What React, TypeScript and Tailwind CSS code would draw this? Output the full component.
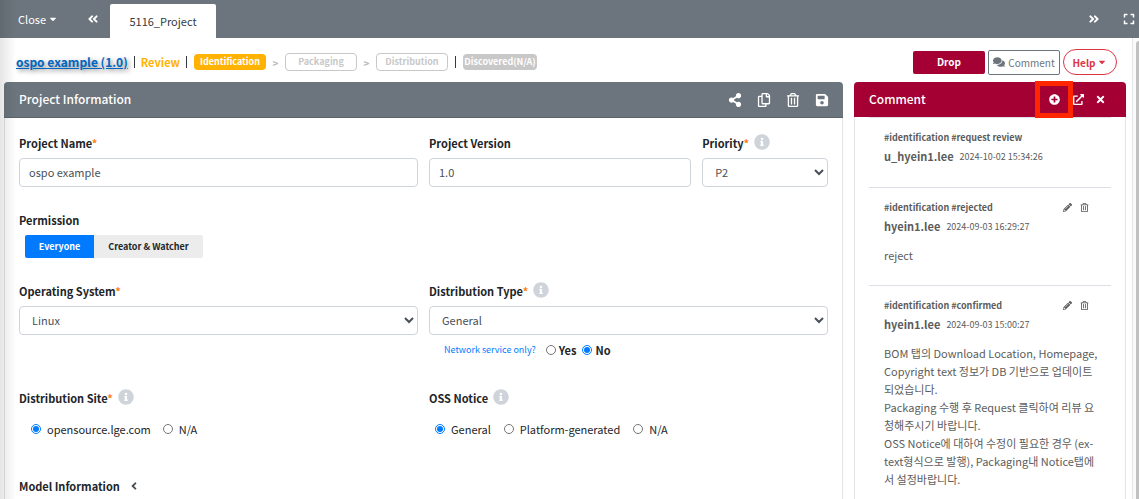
import React, { useState } from "react";
import {
  FaAngleDoubleLeft,
  FaAngleDoubleRight,
  FaAngleLeft,
  FaCaretDown,
  FaComments,
  FaExpand,
  FaExternalLinkAlt,
  FaInfoCircle,
  FaPencilAlt,
  FaPlusCircle,
  FaRegCopy,
  FaRegTrashAlt,
  FaSave,
  FaShareAlt,
  FaTimes,
} from "react-icons/fa";

type CommentEntry = {
  tags: string;
  author: string;
  date: string;
  body: string[];
  editable: boolean;
};

const comments: CommentEntry[] = [
  {
    tags: "#identification #request review",
    author: "u_hyein1.lee",
    date: "2024-10-02 15:34:26",
    body: [],
    editable: false,
  },
  {
    tags: "#identification #rejected",
    author: "hyein1.lee",
    date: "2024-09-03 16:29:27",
    body: ["reject"],
    editable: true,
  },
  {
    tags: "#identification #confirmed",
    author: "hyein1.lee",
    date: "2024-09-03 15:00:27",
    body: [
      "BOM 탭의 Download Location, Homepage, Copyright text 정보가 DB 기반으로 업데이트되었습니다.",
      "Packaging 수행 후 Request 클릭하여 리뷰 요청해주시기 바랍니다.",
      "OSS Notice에 대하여 수정이 필요한 경우 (ex-text형식으로 발행), Packaging내 Notice탭에서 설정바랍니다.",
    ],
    editable: true,
  },
];

function Label({
  text,
  htmlFor,
  required,
  info,
}: {
  text: string;
  htmlFor?: string;
  required?: boolean;
  info?: boolean;
}) {
  return (
    <div className="flex h-5 items-center">
      <label htmlFor={htmlFor} className="text-[11px] leading-5 font-bold whitespace-nowrap">
        {text}
        {required && <span className="text-[#fd7e14]">*</span>}
      </label>
      {info && <FaInfoCircle className="mb-0.5 ml-[5px] size-4 text-[#ced4da]" />}
    </div>
  );
}

function Select({ id, value, options }: { id: string; value: string; options: string[] }) {
  return (
    <select
      id={id}
      defaultValue={value}
      className="mt-[5px] h-[29px] w-full rounded-sm border border-[#ced4da] bg-white pb-0.5 pl-2 text-[11px] text-[#495057]"
    >
      {options.map((option) => (
        <option key={option}>{option}</option>
      ))}
    </select>
  );
}

function Radio({
  name,
  label,
  defaultChecked,
}: {
  name: string;
  label: string;
  defaultChecked?: boolean;
}) {
  return (
    <label className="flex items-center gap-1.5 text-[11px] leading-5">
      <input
        type="radio"
        name={name}
        defaultChecked={defaultChecked}
        className="size-[10px] accent-[#007bff]"
      />
      {label}
    </label>
  );
}

export default function App() {
  const [everyone, setEveryone] = useState(true);

  return (
    <div className="relative flex min-h-screen flex-col bg-white font-['Noto_Sans_CJK_KR',sans-serif] text-[#212529]">
      <header className="flex h-[38px] shrink-0 items-center bg-[#6c757d] text-white">
        <button className="ml-[18px] flex w-[69px] items-center gap-0.5 text-[11px] leading-5">
          Close <FaCaretDown className="size-2.5" />
        </button>
        <button aria-label="Previous tabs" className="w-[23px]">
          <FaAngleDoubleLeft className="size-3" />
        </button>
        <a
          href="#project"
          className="mt-1 flex h-[34px] w-[106px] items-center justify-center rounded-t-xs bg-white text-[11px] text-[#343a40]"
        >
          5116_Project
        </a>
        <button aria-label="Next tabs" className="mr-[23px] ml-auto">
          <FaAngleDoubleRight className="size-3" />
        </button>
        <button aria-label="Full screen" className="mr-1">
          <FaExpand className="size-3" />
        </button>
      </header>

      <div className="flex flex-1">
        <main className="flex min-w-0 flex-1 flex-col pr-1.5 pl-1">
          <div className="flex h-11 shrink-0 items-center pt-1 pl-3">
            <a
              href="#project"
              className="text-xs leading-5 font-bold text-[#0066c0] underline [text-shadow:2px_2px_4px_rgba(0,0,0,0.5)]"
            >
              ospo example (1.0)
            </a>
            <span className="mx-1.5 h-3 w-px bg-[#343a40]" />
            <span className="text-[11px] leading-5 font-bold text-[#ffb300]">Review</span>
            <span className="mr-[7px] ml-1.5 h-3 w-px bg-[#343a40]" />
            <button className="h-4 w-[72px] rounded-sm bg-[#ffb300] text-[9px] leading-4 font-bold text-white">
              Identification
            </button>
            <span className="w-[19px] text-center text-[10px] font-bold text-[#b8b8b8]">&gt;</span>
            <button className="h-[18px] w-[72px] rounded-sm border border-[#c8c8c8] text-[9px] leading-4 font-bold text-[#c8c8c8]">
              Packaging
            </button>
            <span className="w-[19px] text-center text-[10px] font-bold text-[#b8b8b8]">&gt;</span>
            <button className="h-[18px] w-[72px] rounded-sm border border-[#c8c8c8] text-[9px] leading-4 font-bold text-[#c8c8c8]">
              Distribution
            </button>
            <span className="mx-[7px] h-3 w-px bg-[#343a40]" />
            <button className="h-4 w-[74px] rounded-sm bg-[#c8c8c8] text-[9px] leading-4 font-bold whitespace-nowrap text-white">
              Discovered(N/A)
            </button>
            <div className="mr-[9px] ml-auto flex items-center gap-[3px]">
              <button className="h-[23px] w-[72px] rounded-xs bg-[#a50034] text-[10px] leading-5 font-bold text-white">
                Drop
              </button>
              <button className="flex h-[25px] w-[72px] items-center justify-center gap-[3px] rounded-xs border border-[#6c757d] text-[10px] text-[#6c757d]">
                <FaComments className="size-3" />
                Comment
              </button>
              <button className="flex h-[26px] w-[54px] items-center justify-center gap-0.5 rounded-full border border-[#dc3545] text-[10px] font-bold text-[#dc3545]">
                Help <FaCaretDown className="size-2.5" />
              </button>
            </div>
          </div>

          <div className="flex flex-1 gap-[11px]">
            <section className="min-w-0 flex-1 rounded-t-sm border-x border-[#e3e5e8]">
              <div className="-mx-px flex h-9 items-center rounded-t-sm border-b border-[#5c646b] bg-[#6c757d] pr-[14px] pl-[15px] text-white">
                <h2 className="pb-0.5 text-xs leading-5 font-medium">Project Information</h2>
                <div className="ml-auto flex gap-[15px]">
                  <button aria-label="Share">
                    <FaShareAlt className="size-[14px]" />
                  </button>
                  <button aria-label="Copy">
                    <FaRegCopy className="size-[14px]" />
                  </button>
                  <button aria-label="Delete">
                    <FaRegTrashAlt className="size-[14px]" />
                  </button>
                  <button aria-label="Save">
                    <FaSave className="size-[14px]" />
                  </button>
                </div>
              </div>

              <form className="px-[14px] pt-[15px]">
                <div className="grid grid-cols-2 gap-x-[11px]">
                  <div>
                    <Label text="Project Name" htmlFor="name" required />
                    <input
                      id="name"
                      defaultValue="ospo example"
                      className="mt-[5px] h-[29px] w-full rounded-sm border border-[#ced4da] px-[9px] pb-0.5 text-[11px] text-[#495057]"
                    />
                  </div>
                  <div className="grid grid-cols-[25fr_12fr] gap-x-[11px]">
                    <div>
                      <Label text="Project Version" htmlFor="version" />
                      <input
                        id="version"
                        defaultValue="1.0"
                        className="mt-[5px] h-[29px] w-full rounded-sm border border-[#ced4da] px-[9px] pb-0.5 text-[11px] text-[#495057]"
                      />
                    </div>
                    <div>
                      <Label text="Priority" htmlFor="priority" required info />
                      <Select id="priority" value="P2" options={["P1", "P2", "P3"]} />
                    </div>
                  </div>
                </div>

                <div className="mt-[23px]">
                  <Label text="Permission" />
                  <div className="mt-[5px] ml-1.5 flex text-[9px] leading-[23px] font-bold">
                    <button
                      type="button"
                      onClick={() => setEveryone(true)}
                      aria-pressed={everyone}
                      className="h-[23px] w-[69px] rounded-l-xs bg-[#ececec] aria-pressed:bg-[#007bff] aria-pressed:text-white"
                    >
                      Everyone
                    </button>
                    <button
                      type="button"
                      onClick={() => setEveryone(false)}
                      aria-pressed={!everyone}
                      className="h-[23px] w-[109px] rounded-r-xs bg-[#ececec] aria-pressed:bg-[#007bff] aria-pressed:text-white"
                    >
                      Creator &amp; Watcher
                    </button>
                  </div>
                </div>

                <div className="mt-[23px] grid grid-cols-2 gap-x-[11px]">
                  <div>
                    <Label text="Operating System" htmlFor="os" required />
                    <Select id="os" value="Linux" options={["Linux", "Android", "Windows"]} />
                  </div>
                  <div>
                    <Label text="Distribution Type" htmlFor="dist" required info />
                    <Select id="dist" value="General" options={["General", "B2B", "Preceding"]} />
                    <div className="mt-[5px] ml-[15px] flex h-5 items-center text-[11px] font-bold">
                      <span className="mr-[10px] text-[9px] font-normal text-[#007bff]">
                        Network service only?
                      </span>
                      <label className="mr-1.5 flex items-center gap-[3px]">
                        <input type="radio" name="network" className="size-[10px] accent-[#007bff]" />
                        Yes
                      </label>
                      <label className="flex items-center gap-[3px]">
                        <input
                          type="radio"
                          name="network"
                          defaultChecked
                          className="size-[10px] accent-[#007bff]"
                        />
                        No
                      </label>
                    </div>
                  </div>
                </div>

                <div className="mt-7 grid grid-cols-2 gap-x-[11px]">
                  <div>
                    <Label text="Distribution Site" required info />
                    <div className="mt-[11px] ml-3 flex gap-3">
                      <Radio name="site" label="opensource.lge.com" defaultChecked />
                      <Radio name="site" label="N/A" />
                    </div>
                  </div>
                  <div>
                    <Label text="OSS Notice" info />
                    <div className="mt-[11px] ml-1.5 flex gap-[13px]">
                      <Radio name="notice" label="General" defaultChecked />
                      <Radio name="notice" label="Platform-generated" />
                      <Radio name="notice" label="N/A" />
                    </div>
                  </div>
                </div>

                <div className="mt-[37px] flex items-center">
                  <Label text="Model Information" />
                  <button type="button" aria-label="Expand model information" className="ml-2">
                    <FaAngleLeft className="size-3 text-[#495057]" />
                  </button>
                </div>
              </form>
            </section>

            <aside className="w-[272px] shrink-0 rounded-t-sm border-x border-[#e3e5e8] text-[#5c5c5c]">
              <div className="-mx-px flex h-[35px] items-center rounded-t-sm bg-[#a50034] pr-5 pl-[15px] text-white">
                <h2 className="pb-0.5 text-xs leading-5 font-medium">Comment</h2>
                <div className="ml-auto flex items-center">
                  <span className="flex h-[37px] w-[38px] items-center justify-center border-5 border-[#ff2600]">
                    <button aria-label="Add comment">
                      <FaPlusCircle className="size-[11px]" />
                    </button>
                  </span>
                  <button aria-label="Open in new window" className="mr-[11px]">
                    <FaExternalLinkAlt className="size-[11px]" />
                  </button>
                  <button aria-label="Close comments">
                    <FaTimes className="size-[11px]" />
                  </button>
                </div>
              </div>
              <ul className="px-[14px]">
                {comments.map((comment) => (
                  <li
                    key={comment.tags}
                    className="min-h-[69px] border-t border-[#dcdee8] px-[15px] pt-[10px] pb-[21px]"
                  >
                    <div className="flex items-center text-[9px] leading-[19px] font-bold">
                      {comment.tags}
                      {comment.editable && (
                        <span className="mr-[7px] ml-auto flex gap-2">
                          <button aria-label="Edit comment">
                            <FaPencilAlt className="size-[9px]" />
                          </button>
                          <button aria-label="Delete comment">
                            <FaRegTrashAlt className="size-[9px]" />
                          </button>
                        </span>
                      )}
                    </div>
                    <div className="flex items-center gap-1.5 leading-[19px]">
                      <strong className="text-[11px] leading-[19px]">{comment.author}</strong>
                      <time className="text-[9px]">{comment.date}</time>
                    </div>
                    {comment.body.length > 0 && (
                      <div className="-mr-1 mt-[10px] text-[11px] leading-[18px]">
                        {comment.body.map((line) => (
                          <p key={line}>{line}</p>
                        ))}
                      </div>
                    )}
                  </li>
                ))}
              </ul>
            </aside>
          </div>
        </main>

        <div className="flex w-[7px] shrink-0 border-l border-[#e3e5e8] bg-[#fafafa] pt-[3px] pl-[3px]">
          <div className="flex-1 rounded-tl-sm bg-[#c1c1c1]" />
        </div>
      </div>

      <div className="pointer-events-none absolute inset-y-0 left-0 w-4 bg-linear-to-r from-black/10 to-transparent" />
    </div>
  );
}
